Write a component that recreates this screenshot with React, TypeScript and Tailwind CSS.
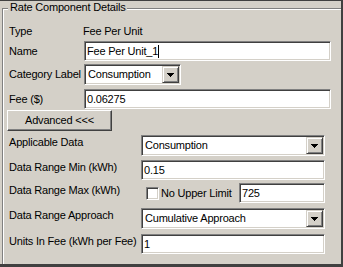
import React from 'react'

const sunken =
  'bg-white border border-t-[#808080] border-l-[#808080] border-b-white border-r-white shadow-[inset_1px_1px_0_#404040,inset_-1px_-1px_0_#d4d0c8]'
const raised =
  'bg-[#d4d0c8] border border-t-[#d4d0c8] border-l-[#d4d0c8] border-b-[#404040] border-r-[#404040] shadow-[inset_1px_1px_0_#fff,inset_-1px_-1px_0_#808080]'

function TextBox({ value, width, caret }: { value: string; width: string; caret?: boolean }) {
  return (
    <div className={`flex items-center h-full pl-[2px] ${width} ${sunken}`}>
      <span className="whitespace-pre">{value}</span>
      {caret && <span className="w-px h-[13px] bg-black" />}
    </div>
  )
}

function Arrow() {
  return (
    <svg width="7" height="4" shapeRendering="crispEdges">
      <rect x="0" y="0" width="7" height="1" fill="#000" />
      <rect x="1" y="1" width="5" height="1" fill="#000" />
      <rect x="2" y="2" width="3" height="1" fill="#000" />
      <rect x="3" y="3" width="1" height="1" fill="#000" />
    </svg>
  )
}

function Combo({ value, width }: { value: string; width: string }) {
  return (
    <div className={`flex items-center h-full p-[1px] ${width} ${sunken}`}>
      <span className="flex-1 pl-[2px] whitespace-pre">{value}</span>
      <div className={`w-[17px] h-[17px] flex items-center justify-center ${raised}`}>
        <Arrow />
      </div>
    </div>
  )
}

function Row({ label, children, className = '' }: { label: string; children: React.ReactNode; className?: string }) {
  return (
    <div className={`flex items-start ${className}`}>
      <div className="w-[132px] pt-[1px]">{label}</div>
      <div className="h-full">{children}</div>
    </div>
  )
}

export default function App() {
  return (
    <div className="w-[343px] h-[267px] box-border overflow-hidden bg-[#d4d0c8] border-t border-r-2 border-b-[3px] border-[#404040] font-['Liberation_Sans',Arial,sans-serif] text-[11px] leading-[13px] tracking-[-0.2px] text-black">
      <div className="relative mt-[7px] ml-[2px] w-[360px] border-t border-l border-[#808080] shadow-[inset_1px_1px_0_#fff] pb-[40px]">
        <span className="absolute top-[-8px] left-[5px] px-[2px] bg-[#d4d0c8]">Rate Component Details</span>

        <div className="pl-[6px] pt-[12px]">
          <div className="flex items-center h-[20px]">
            <div className="w-[74px]">Type</div>
            <div>Fee Per Unit</div>
          </div>

          <div className="flex items-center h-[20px]">
            <div className="w-[75px]">Name</div>
            <TextBox value="Fee Per Unit_1" width="w-[247px]" caret />
          </div>

          <div className="flex items-center h-[21px] mt-[3px]">
            <div className="w-[75px]">Category Label</div>
            <Combo value="Consumption" width="w-[97px]" />
          </div>

          <div className="flex items-center h-[20px] mt-[4px]">
            <div className="w-[75px]">Fee ($)</div>
            <TextBox value="0.06275" width="w-[247px]" />
          </div>

          <button className={`mt-[1px] ml-[-2px] w-[105px] h-[21px] flex items-center justify-center border border-t-white border-l-white border-b-[#404040] border-r-[#404040] shadow-[inset_-1px_-1px_0_#808080] bg-[#d4d0c8]`}>
            Advanced &lt;&lt;&lt;
          </button>

          <Row label="Applicable Data" className="h-[21px] mt-[4px]">
            <Combo value="Consumption" width="w-[184px]" />
          </Row>

          <Row label="Data Range Min (kWh)" className="h-[20px] mt-[4px]">
            <TextBox value="0.15" width="w-[184px]" />
          </Row>

          <Row label="Data Range Max (kWh)" className="h-[20px] mt-[3px]">
            <div className="flex items-center h-full w-[184px]">
              <div className={`ml-[5px] w-[13px] h-[13px] ${sunken}`} />
              <span className="ml-[2px]">No Upper Limit</span>
              <div className="ml-auto h-full">
                <TextBox value="725" width="w-[86px]" />
              </div>
            </div>
          </Row>

          <Row label="Data Range Approach" className="h-[21px] mt-[5px]">
            <Combo value="Cumulative Approach" width="w-[184px]" />
          </Row>

          <Row label="Units In Fee (kWh per Fee)" className="h-[20px] mt-[5px]">
            <TextBox value="1" width="w-[184px]" />
          </Row>
        </div>
      </div>
    </div>
  )
}
